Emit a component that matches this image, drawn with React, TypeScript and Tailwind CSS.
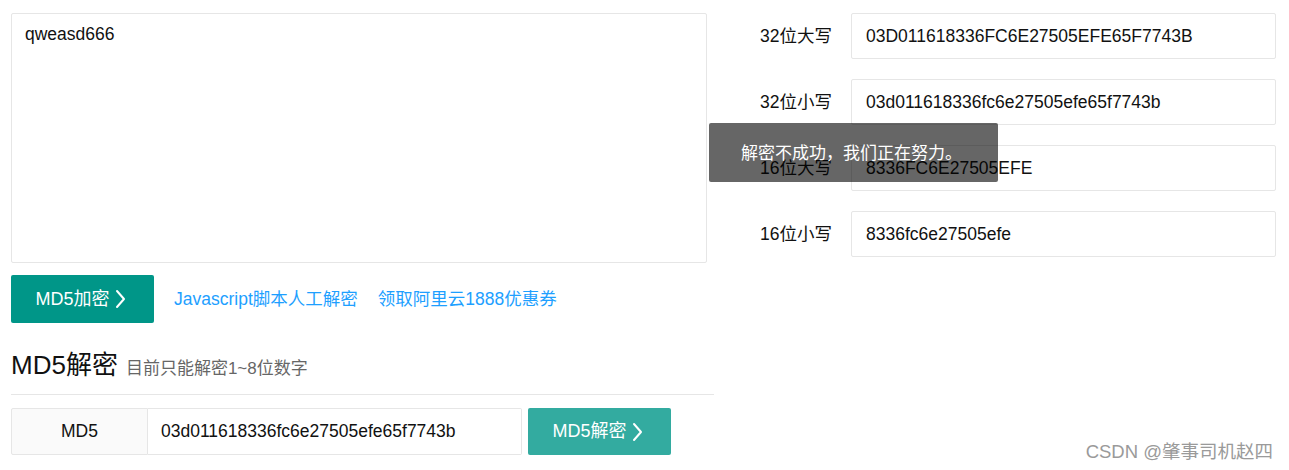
import React from "react";

const font = { fontFamily: '"Liberation Sans", "Noto Sans CJK SC", sans-serif' };

const results = [
  { label: "32位大写", value: "03D011618336FC6E27505EFE65F7743B" },
  { label: "32位小写", value: "03d011618336fc6e27505efe65f7743b" },
  { label: "16位大写", value: "8336FC6E27505EFE" },
  { label: "16位小写", value: "8336fc6e27505efe" },
];

function Chevron() {
  return (
    <svg width="11" height="20" viewBox="0 0 11 20" className="ml-[5px]" fill="none">
      <path d="M2 2l7 8-7 8" stroke="white" strokeWidth="2" strokeLinecap="round" strokeLinejoin="round" />
    </svg>
  );
}

export default function App() {
  return (
    <div className="relative w-[1289px] h-[470px] bg-white overflow-hidden text-[17.5px] text-[#222]" style={font}>
      <div className="flex pl-[11px] pt-[13px]">
        {/* left: encrypt + decrypt */}
        <div className="w-[703px] flex flex-col">
          <div className="w-[696px] h-[250px] border border-[#e6e6e6] rounded-[2px] px-[13px] pt-[9px] leading-[22px] text-[#111]">
            qweasd666
          </div>

          <div className="flex items-center mt-[12px]">
            <button className="w-[143px] h-[48px] bg-[#009688] text-white rounded-[2px] flex items-center justify-center text-[18px] pr-[4px]">
              MD5加密
              <Chevron />
            </button>
            <a className="ml-[20px] text-[#1e9fff] text-[17.5px]">Javascript脚本人工解密</a>
            <a className="ml-[20px] text-[#1e9fff] text-[17.5px]">领取阿里云1888优惠券</a>
          </div>

          <div className="flex items-end mt-[25px] pb-[12px] border-b border-[#e6e6e6] w-[703px]">
            <h2 className="text-[26px] leading-[34px] text-[#111]">MD5解密</h2>
            <span className="ml-[8px] text-[17px] text-[#666] leading-[27px]">目前只能解密1~8位数字</span>
          </div>

          <div className="flex mt-[13px] h-[47px]">
            <div className="w-[137px] border border-[#e6e6e6] bg-[#fafafa] rounded-l-[2px] flex items-center justify-center text-[#111]">
              MD5
            </div>
            <div className="w-[374px] border border-l-0 border-[#e6e6e6] rounded-r-[2px] flex items-center pl-[13px] text-[#111]">
              03d011618336fc6e27505efe65f7743b
            </div>
            <button className="ml-[6px] w-[143px] bg-[#33aba0] text-white rounded-[2px] flex items-center justify-center text-[18px] pr-[4px]">
              MD5解密
              <Chevron />
            </button>
          </div>
        </div>

        {/* right: results */}
        <div className="flex flex-col gap-[20px]">
          {results.map((r) => (
            <div key={r.label} className="flex items-center h-[46px]">
              <div className="w-[118px] text-right text-[#111]">{r.label}</div>
              <div className="ml-[19px] w-[425px] h-[46px] border border-[#e6e6e6] rounded-[2px] flex items-center pl-[14px] text-[#111]">
                {r.value}
              </div>
            </div>
          ))}
        </div>
      </div>

      {/* toast */}
      <div className="absolute left-[709px] top-[123px] w-[289px] h-[59px] bg-black/60 rounded-[2px] text-white text-[17px] pl-[32px] pt-[20px] leading-[22px]">
        解密不成功，我们正在努力。
      </div>

      {/* watermark */}
      <div className="absolute right-[16px] top-[441px] text-[18.5px] text-[#9a9a9a] leading-[22px]">
        CSDN @肇事司机赵四
      </div>
    </div>
  );
}
